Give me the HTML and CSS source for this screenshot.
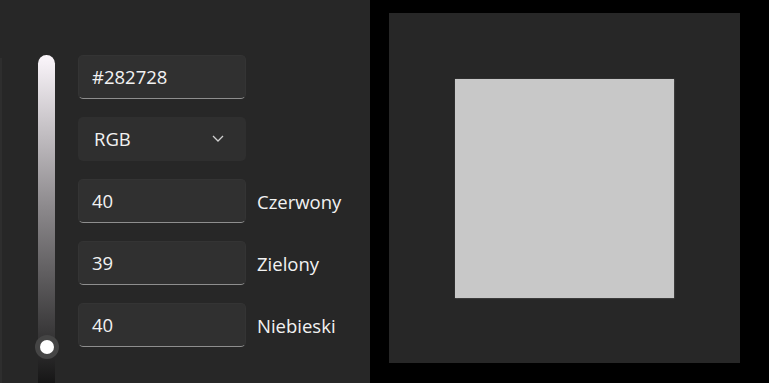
FILE: index.html
```html
<!DOCTYPE html>
<html lang="pl">
<head>
<meta charset="utf-8">
<title>Kolor</title>
<link rel="stylesheet" href="styles.css">
</head>
<body>
<div class="app">
  <section class="editor">
    <div class="edge"></div>
    <div class="slider">
      <div class="track"></div>
      <div class="thumb"><div class="thumb-dot"></div></div>
    </div>
    <div class="controls">
      <div class="row">
        <div class="field input">#282728</div>
      </div>
      <div class="row">
        <div class="field combo">
          <span>RGB</span>
          <svg class="chev" width="12" height="7" viewBox="0 0 12 7"><path d="M1 1 L6 6 L11 1" fill="none" stroke="#d0d0d0" stroke-width="1.3"/></svg>
        </div>
      </div>
      <div class="row">
        <div class="field input">40</div>
        <span class="label">Czerwony</span>
      </div>
      <div class="row">
        <div class="field input">39</div>
        <span class="label">Zielony</span>
      </div>
      <div class="row">
        <div class="field input">40</div>
        <span class="label">Niebieski</span>
      </div>
    </div>
  </section>
  <section class="preview-area">
    <div class="preview">
      <div class="swatch"></div>
    </div>
  </section>
</div>
</body>
</html>
```
FILE: styles.css
```css
html, body {
  margin: 0;
  padding: 0;
  height: 100%;
  overflow: hidden;
  background: #000;
}
.app {
  display: flex;
  width: 769px;
  height: 383px;
  font-family: "Open Sans", "Noto Sans", sans-serif;
  color: #f2f2f2;
}
.editor {
  width: 370px;
  height: 383px;
  background: #272727;
  display: flex;
  align-items: flex-start;
  padding-top: 55px;
  box-sizing: border-box;
  overflow: hidden;
}
.edge {
  width: 2px;
  height: 330px;
  margin-top: 3px;
  background: #2e2e2e;
}
.slider {
  position: relative;
  width: 17px;
  height: 345px;
  margin-left: 36px;
}
.track {
  width: 17px;
  height: 345px;
  border-radius: 9px 9px 0 0;
  background: linear-gradient(#fbf6fb, #8a878a 45%, #3a393a 80%, #0a0a0a);
}
.thumb {
  position: absolute;
  left: -3.5px;
  top: 280px;
  width: 24px;
  height: 24px;
  border-radius: 50%;
  background: #454545;
  display: flex;
  align-items: center;
  justify-content: center;
}
.thumb-dot {
  width: 14px;
  height: 14px;
  border-radius: 50%;
  background: #fff;
}
.controls {
  margin-left: 23px;
  display: flex;
  flex-direction: column;
  gap: 18px;
}
.row {
  display: flex;
  align-items: center;
  gap: 11px;
}
.field {
  width: 168px;
  height: 44px;
  box-sizing: border-box;
  border-radius: 5px;
  background: #303030;
  display: flex;
  align-items: center;
  padding-left: 13px;
  padding-bottom: 1px;
  font-size: 18.5px;
}
.input {
  border: 1px solid #343434;
  border-bottom: 1.5px solid #8e8e8e;
}
.combo {
  justify-content: space-between;
  padding-left: 16px;
  padding-right: 22px;
  background: #2f2f2f;
}
.chev {
  display: block;
}
.label {
  font-size: 18.5px;
  color: #f2f2f2;
}
.preview-area {
  flex: 1;
  background: #000;
  padding: 13px 0 0 19px;
  box-sizing: border-box;
}
.preview {
  width: 351px;
  height: 350px;
  background: #272727;
  box-sizing: border-box;
  padding: 66px;
}
.swatch {
  width: 219px;
  height: 219px;
  background: #c8c8c8;
  box-shadow: 0 0 1.5px 0.5px #6a6a6a;
}
```
